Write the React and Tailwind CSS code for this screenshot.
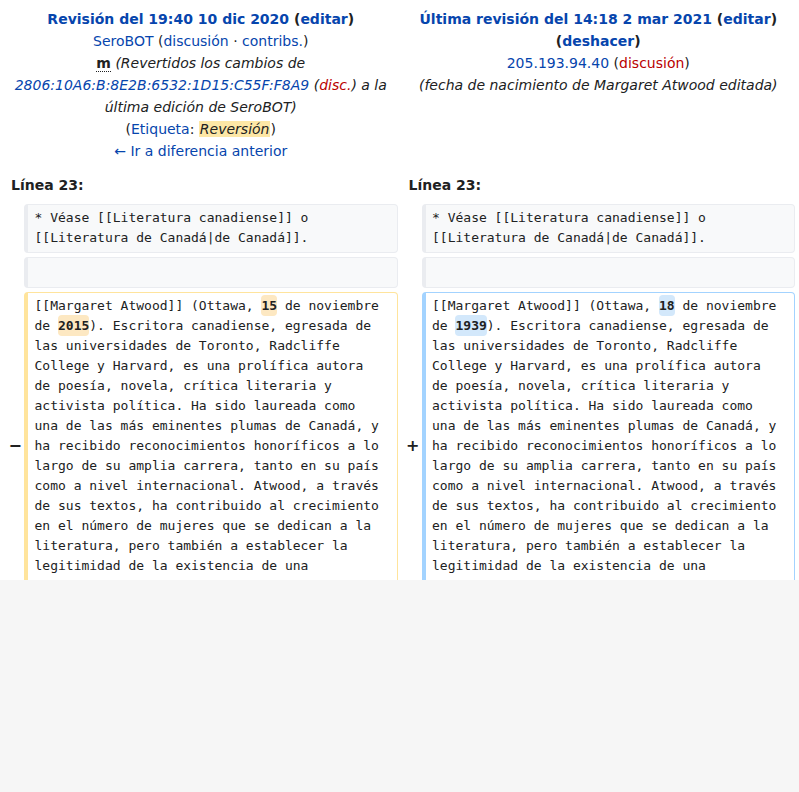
import React from 'react';

const link = "text-[#0645ad]";
const red = "text-[#ba0000]";

const Cell = ({ kind = "context", children }) => {
  const tone = {
    context: "bg-[#f8f9fa] border-[#eaecf0]",
    deleted: "bg-white border-[#ffe49c]",
    added: "bg-white border-[#a3d3ff]",
  }[kind];
  return (
    <div
      className={`border border-l-4 rounded-[4px] pl-[6.5px] pr-[12px] py-[3.25px] text-[13px] leading-[20px] whitespace-pre-wrap break-words text-[#202122] min-h-[31px] ${tone}`}
      style={{ fontFamily: '"DejaVu Sans Mono", monospace' }}
    >
      {children}
    </div>
  );
};

const Marker = ({ sign }) => (
  <div className="flex items-center justify-end pr-[2px] text-[16px] font-bold text-[#202122]">
    {sign}
  </div>
);

// cambio resaltado dentro de la línea
const Change = ({ kind, children }) => (
  <span
    className={`font-bold rounded-[4px] py-[3px] ${kind === "deleted" ? "bg-[#fde8c2]" : "bg-[#d3e8fb]"}`}
  >
    {children}
  </span>
);

const Paragraph = ({ kind, day, year }) => (
  <>
    [[Margaret Atwood]] (Ottawa, <Change kind={kind}>{day}</Change> de noviembre de{" "}
    <Change kind={kind}>{year}</Change>). Escritora canadiense, egresada de las universidades de Toronto, Radcliffe College y Harvard, es una prolífica autora de poesía, novela, crítica literaria y activista política. Ha sido laureada como una de las más eminentes plumas de Canadá, y ha recibido reconocimientos honoríficos a lo largo de su amplia carrera, tanto en su país como a nivel internacional. Atwood, a través de sus textos, ha contribuido al crecimiento en el número de mujeres que se dedican a la literatura, pero también a establecer la legitimidad de la existencia de una literatura canadiense.
  </>
);

const App = () => {
  return (
    <div className="min-h-screen bg-[#f6f6f6]" style={{ fontFamily: '"DejaVu Sans", sans-serif' }}>
      <div className="h-[580px] overflow-hidden bg-white text-[#202122]">
        {/* cabecera de revisiones */}
        <div className="grid grid-cols-[24px_1fr_24px_1fr] pr-[4px] text-[14px] leading-[22px]">
          <div className="col-span-2 text-center pl-[9px] pr-[5px] pt-[8px]">
            <div className="font-bold">
              <span className={link}>Revisión del 19:40 10 dic 2020</span> (<span className={link}>editar</span>)
            </div>
            <div>
              <span className={link}>SeroBOT</span> (<span className={link}>discusión</span> · <span className={link}>contribs.</span>)
            </div>
            <div>
              <abbr className="font-bold no-underline border-b border-dotted border-[#202122]">m</abbr>{" "}
              <i>
                (Revertidos los cambios de <span className={link}>2806:10A6:B:8E2B:6532:1D15:C55F:F8A9</span> (
                <span className={red}>disc.</span>) a la última edición de SeroBOT)
              </i>
            </div>
            <div>
              (<span className={link}>Etiqueta</span>: <i className="bg-[#fde7a6] px-[1px]">Reversión</i>)
            </div>
            <div>
              <span className={link}>← Ir a diferencia anterior</span>
            </div>
          </div>
          <div className="col-span-2 text-center pl-[9px] pr-[5px] pt-[8px]">
            <div className="font-bold">
              <span className={link}>Última revisión del 14:18 2 mar 2021</span> (<span className={link}>editar</span>) (
              <span className={link}>deshacer</span>)
            </div>
            <div>
              <span className={link}>205.193.94.40</span> (<span className={red}>discusión</span>)
            </div>
            <div>
              <i>(fecha de nacimiento de Margaret Atwood editada)</i>
            </div>
          </div>
        </div>

        {/* número de línea */}
        <div className="grid grid-cols-2 pr-[4px] mt-[12px] mb-[8px] text-[14px] leading-[22px] font-bold">
          <div className="pl-[11px]">Línea 23:</div>
          <div className="pl-[11px]">Línea 23:</div>
        </div>

        {/* filas del diff */}
        <div className="grid grid-cols-[24px_1fr_24px_1fr] gap-y-[4px] pr-[4px]">
          <Marker sign="" />
          <Cell>* Véase [[Literatura canadiense]] o [[Literatura de Canadá|de Canadá]].</Cell>
          <Marker sign="" />
          <Cell>* Véase [[Literatura canadiense]] o [[Literatura de Canadá|de Canadá]].</Cell>

          <Marker sign="" />
          <Cell />
          <Marker sign="" />
          <Cell />

          <Marker sign="−" />
          <Cell kind="deleted">
            <Paragraph kind="deleted" day="15" year="2015" />
          </Cell>
          <Marker sign="+" />
          <Cell kind="added">
            <Paragraph kind="added" day="18" year="1939" />
          </Cell>
        </div>
      </div>
    </div>
  );
};

export default App;
